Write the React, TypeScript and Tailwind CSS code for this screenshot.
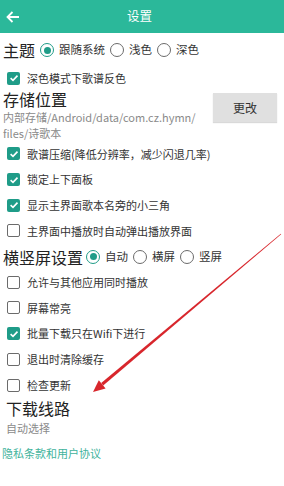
import React from 'react';

const font = { fontFamily: '"Noto Sans CJK SC", "Noto Sans", sans-serif' };

const CheckBox = ({ checked }: { checked: boolean }) =>
  checked ? (
    <span className="flex h-[13px] w-[13px] shrink-0 items-center justify-center rounded-[2px] bg-[#1f9c88]">
      <svg width="10" height="10" viewBox="0 0 10 10">
        <path d="M1.6 5.2 L4 7.4 L8.5 2.6" fill="none" stroke="white" strokeWidth="1.6" />
      </svg>
    </span>
  ) : (
    <span className="h-[13px] w-[13px] shrink-0 rounded-[2px] border-[1.6px] border-[#6b6b6b]" />
  );

const Radio = ({ on }: { on: boolean }) =>
  on ? (
    <span className="flex h-[14px] w-[14px] shrink-0 items-center justify-center rounded-full border-[1.6px] border-[#1f9c88]">
      <span className="h-[7px] w-[7px] rounded-full bg-[#1f9c88]" />
    </span>
  ) : (
    <span className="h-[14px] w-[14px] shrink-0 rounded-full border-[1.4px] border-[#6b6b6b]" />
  );

const CheckRow = ({ label, checked }: { label: string; checked: boolean }) => (
  <div className="flex h-[25.7px] items-center gap-[7px] pl-[7px]">
    <CheckBox checked={checked} />
    <span className="whitespace-nowrap text-[11px] text-[#333]">{label}</span>
  </div>
);

const RadioItem = ({ label, on }: { label: string; on: boolean }) => (
  <div className="flex items-center gap-[5px]">
    <Radio on={on} />
    <span className="text-[11.5px] text-[#333]">{label}</span>
  </div>
);

export default function App() {
  return (
    <div className="relative h-[486px] w-[284px] overflow-hidden bg-white" style={font}>
      {/* Header */}
      <div className="flex h-[33px] items-center bg-[#2bb89a] px-[5px] text-white">
        <svg width="16" height="16" viewBox="0 0 16 16">
          <path d="M14 8 H2.5 M7.5 3 L2.5 8 L7.5 13" fill="none" stroke="white" strokeWidth="1.8" />
        </svg>
        <div className="flex-1 pr-[21px] text-center text-[12.5px]">设置</div>
      </div>

      {/* 主题 */}
      <div className="flex h-[34px] items-center gap-[4px] pl-[3px]">
        <span className="mr-[1px] text-[16px] text-[#222]">主题</span>
        <div className="flex items-center gap-[5px]">
          <RadioItem label="跟随系统" on />
          <RadioItem label="浅色" on={false} />
          <RadioItem label="深色" on={false} />
        </div>
      </div>
      <div className="flex h-[22px] items-center gap-[7px] pl-[7px]">
        <CheckBox checked />
        <span className="text-[11px] text-[#333]">深色模式下歌谱反色</span>
      </div>

      {/* 存储位置 */}
      <div className="flex pl-[3px] pr-[7px]">
        <div className="flex-1">
          <div className="flex h-[20px] items-center text-[16px] text-[#222]">存储位置</div>
          <div className="whitespace-nowrap text-[11px] leading-[16px] text-[#8a8a8a]">
            内部存储/Android/data/com.cz.hymn/
            <br />
            files/诗歌本
          </div>
        </div>
        <button className="mt-[4px] flex h-[29px] w-[64px] items-center justify-center bg-[#e0e0e0] text-[12px] text-[#333] shadow-[0_1px_1px_rgba(0,0,0,0.15)]">
          更改
        </button>
      </div>

      <CheckRow label="歌谱压缩(降低分辨率，减少闪退几率)" checked />
      <CheckRow label="锁定上下面板" checked />
      <CheckRow label="显示主界面歌本名旁的小三角" checked />
      <CheckRow label="主界面中播放时自动弹出播放界面" checked={false} />

      {/* 横竖屏设置 */}
      <div className="flex h-[25.7px] items-center gap-[3px] pl-[3px]">
        <span className="text-[16px] text-[#222]">横竖屏设置</span>
        <div className="flex items-center gap-[5px]">
          <RadioItem label="自动" on />
          <RadioItem label="横屏" on={false} />
          <RadioItem label="竖屏" on={false} />
        </div>
      </div>

      <CheckRow label="允许与其他应用同时播放" checked={false} />
      <CheckRow label="屏幕常亮" checked={false} />
      <CheckRow label="批量下载只在Wifi下进行" checked />
      <CheckRow label="退出时清除缓存" checked={false} />
      <CheckRow label="检查更新" checked={false} />

      {/* 下载线路 */}
      <div className="pl-[6px]">
        <div className="text-[16px] leading-[21px] text-[#222]">下载线路</div>
        <div className="mt-[2px] text-[11px] leading-[14px] text-[#8a8a8a]">自动选择</div>
      </div>
      <div className="mt-[10px] pl-[2px] text-[11px] leading-[16px] text-[#3fb39c]">隐私条款和用户协议</div>

      {/* red annotation arrow */}
      <svg className="pointer-events-none absolute left-0 top-0" width="284" height="486" viewBox="0 0 284 486">
        <polygon points="281.2,234.2 280.8,233.8 101.2,383.1 103.2,385.5" fill="#d8262c" />
        <polygon points="93,392 105.6,388.4 98.8,380.2" fill="#d8262c" />
      </svg>
    </div>
  );
}
